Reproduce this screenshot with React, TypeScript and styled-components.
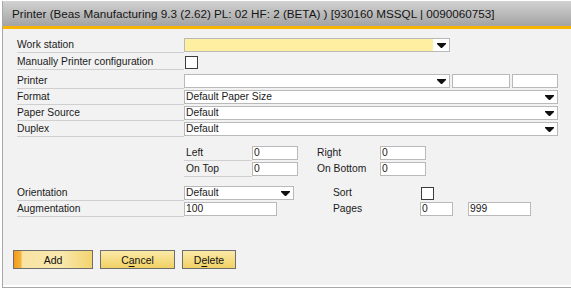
import styled, { createGlobalStyle } from 'styled-components';

const GlobalStyle = createGlobalStyle`
  html, body {
    margin: 0;
    padding: 0;
    background: #fff;
  }
  body {
    font-family: "Liberation Sans", Arial, sans-serif;
    font-size: 10.3px;
    color: #1a1a1a;
  }
`

const Frame = styled.div`
  box-sizing: border-box;
  width: 571px;
  height: 288px;
  padding: 1px 0 0 2px;
  background: #fff;
  overflow: hidden;
`

const Window = styled.div`
  box-sizing: border-box;
  height: 287px;
  border-left: 1px solid #a8a8a8;
  border-bottom: 1px solid #a8a8a8;
  padding-bottom: 2px;
  display: flex;
  flex-direction: column;
  background: #fff;
`

const TitleBar = styled.div`
  height: 25px;
  flex: none;
  display: flex;
  align-items: center;
  padding-left: 9px;
  background: linear-gradient(#d2d2d2, #a3a3a3);
  border-bottom: 3px solid #f7b500;
  font-size: 11.7px;
  color: #151515;
  white-space: nowrap;
`

const Body = styled.div`
  flex: 1;
  background: #f2f2f2;
  padding: 8px 0 0 10px;
`

const FormArea = styled.div`
  padding-left: 4px;
`

const Row = styled.div<{ $top?: number }>`
  display: flex;
  align-items: center;
  height: 16px;
  margin-top: ${p => p.$top ?? 0}px;
`

const Label = styled.div<{ $w: number; $line?: boolean; $pad?: number }>`
  box-sizing: border-box;
  width: ${p => p.$w}px;
  height: 16px;
  line-height: 16px;
  padding-left: ${p => p.$pad ?? 0}px;
  flex: none;
  white-space: nowrap;
  border-bottom: 1px solid ${p => (p.$line ? '#cfcfcf' : 'transparent')};
`

const Field = styled.div<{ $w: number; $yellow?: boolean; $ml?: number }>`
  box-sizing: border-box;
  width: ${p => p.$w}px;
  height: 14px;
  flex: none;
  margin-left: ${p => p.$ml ?? 0}px;
  border: 1px solid #b9b9b9;
  background: ${p => (p.$yellow ? '#fff0a1' : '#fff')};
  display: flex;
  align-items: center;
  padding-left: 1px;
  line-height: 12px;
  white-space: nowrap;
  overflow: hidden;
`

const FieldText = styled.span`
  flex: 1;
  overflow: hidden;
`

const ArrowBox = styled.span`
  width: 16px;
  height: 12px;
  flex: none;
  background: #fff;
  display: flex;
  align-items: center;
  justify-content: center;
`

const CheckBox = styled.div<{ $ml?: number }>`
  box-sizing: border-box;
  width: 13px;
  height: 13px;
  flex: none;
  margin-left: ${p => p.$ml ?? 0}px;
  border: 1px solid #3c3c3c;
  background: #fff;
`

const Block = styled.div<{ $top: number; $indent?: number }>`
  margin-top: ${p => p.$top}px;
  margin-left: ${p => p.$indent ?? 0}px;
`

const Spacer = styled.div<{ $w: number }>`
  width: ${p => p.$w}px;
  flex: none;
`

const ButtonBar = styled.div`
  display: flex;
  gap: 7px;
  margin-top: 33px;
`

const Button = styled.button<{ $w: number; $primary?: boolean }>`
  box-sizing: border-box;
  width: ${p => p.$w}px;
  height: 19px;
  padding: 0;
  border: 1px solid #6e6e6e;
  font-family: "Liberation Sans", Arial, sans-serif;
  font-size: 10.5px;
  color: #111;
  background: ${p =>
    p.$primary
      ? 'linear-gradient(to right, #f39a1c 0, #f5b43a 7px, #f8e3a2 8px, #f9e8ae 60%, #f3d46e 100%)'
      : 'linear-gradient(#fae9a8, #f2d163)'};

  u {
    text-decoration-thickness: 1px;
    text-underline-offset: 2px;
  }
`

function Arrow() {
    return (
        <svg width="9" height="5" viewBox="0 0 9 5">
            <polygon points="0,0 9,0 9,1 5,5 4,5 0,1" fill="#111" />
        </svg>
    );
}

function Select(props: { w: number; value?: string; yellow?: boolean }) {
    return (
        <Field $w={props.w} $yellow={props.yellow}>
            <FieldText>{props.value}</FieldText>
            <ArrowBox><Arrow /></ArrowBox>
        </Field>
    );
}

function App() {
    return (
        <Frame>
            <GlobalStyle />
            <Window>
                <TitleBar>Printer (Beas Manufacturing 9.3 (2.62) PL: 02 HF: 2 (BETA) ) [930160 MSSQL | 0090060753]</TitleBar>
                <Body>
                    <FormArea>
                        <Row>
                            <Label $w={167} $line>Work station</Label>
                            <Select w={266} yellow />
                        </Row>
                        <Row $top={1}>
                            <Label $w={167} $line>Manually Printer configuration</Label>
                            <CheckBox $ml={1} />
                        </Row>
                        <Row $top={3}>
                            <Label $w={167} $line>Printer</Label>
                            <Select w={266} />
                            <Field $w={58} $ml={2} />
                            <Field $w={46} $ml={2} />
                        </Row>
                        <Row>
                            <Label $w={167} $line>Format</Label>
                            <Select w={374} value="Default Paper Size" />
                        </Row>
                        <Row>
                            <Label $w={167} $line>Paper Source</Label>
                            <Select w={374} value="Default" />
                        </Row>
                        <Row>
                            <Label $w={167} $line>Duplex</Label>
                            <Select w={374} value="Default" />
                        </Row>

                        <Block $top={8} $indent={167}>
                            <Row>
                                <Label $w={68} $line $pad={2}>Left</Label>
                                <Field $w={46}>0</Field>
                                <Spacer $w={19} />
                                <Label $w={63}>Right</Label>
                                <Field $w={46}>0</Field>
                            </Row>
                            <Row>
                                <Label $w={68} $line $pad={2}>On Top</Label>
                                <Field $w={46}>0</Field>
                                <Spacer $w={19} />
                                <Label $w={63}>On Bottom</Label>
                                <Field $w={46}>0</Field>
                            </Row>
                        </Block>

                        <Block $top={8}>
                            <Row>
                                <Label $w={167} $line>Orientation</Label>
                                <Select w={110} value="Default" />
                                <Spacer $w={39} />
                                <Label $w={87}>Sort</Label>
                                <CheckBox $ml={1} />
                            </Row>
                            <Row>
                                <Label $w={167} $line>Augmentation</Label>
                                <Field $w={93}>100</Field>
                                <Spacer $w={56} />
                                <Label $w={87}>Pages</Label>
                                <Field $w={33}>0</Field>
                                <Field $w={63} $ml={15}>999</Field>
                            </Row>
                        </Block>
                    </FormArea>

                    <ButtonBar>
                        <Button $w={80} $primary>Add</Button>
                        <Button $w={75}>C<u>a</u>ncel</Button>
                        <Button $w={54}>D<u>e</u>lete</Button>
                    </ButtonBar>
                </Body>
            </Window>
        </Frame>
    );
}

export default App;
